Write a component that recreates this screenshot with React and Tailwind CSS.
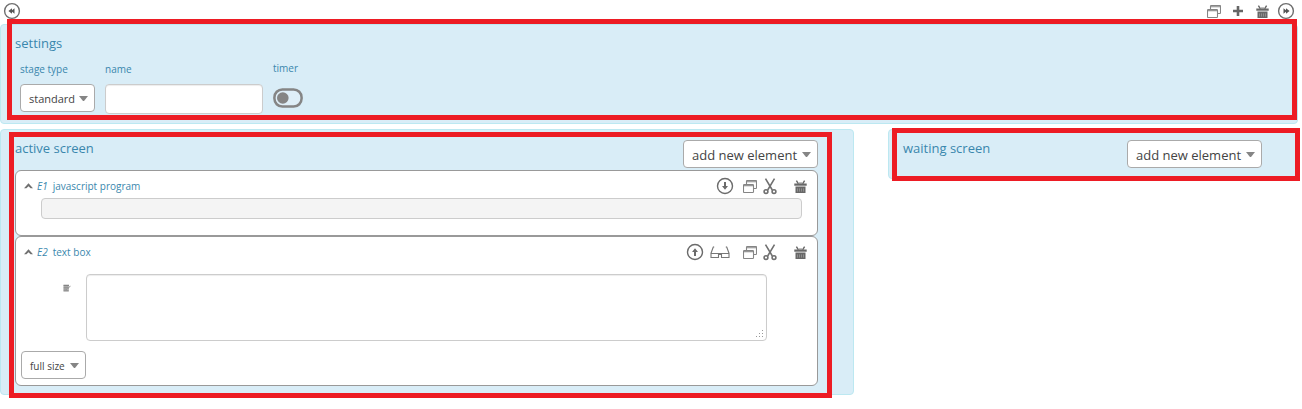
import React from "react";

const Rewind = ({ flip = false }) => (
  <svg width="18" height="18" viewBox="0 0 18 18" className={flip ? "-scale-x-100" : ""}>
    <circle cx="9" cy="9" r="7.4" fill="none" stroke="#6e6e6e" strokeWidth="1.4" />
    <path d="M5.4 9 9 6.2V11.8ZM8.2 9 11.5 6.2V11.8Z" fill="#555" />
  </svg>
);

const CircleArrow = ({ up = false }) => (
  <svg width="18" height="18" viewBox="0 0 18 18" className={up ? "-scale-y-100" : ""}>
    <circle cx="9" cy="9" r="7.5" fill="none" stroke="#6b6b6b" strokeWidth="1.4" />
    <path d="M8 5H10V9H12L9 12.8 6 9H8Z" fill="#6b6b6b" />
  </svg>
);

const Windows = () => (
  <svg width="14" height="13" viewBox="0 0 14 13" fill="none" stroke="#858585" strokeWidth="1.1">
    <path d="M3.5 4V1.2Q3.5.5 4.2.5H12.8Q13.5.5 13.5 1.2V7.8Q13.5 8.5 12.8 8.5H11M3.5 1.7H13.5" />
    <rect x=".5" y="4.5" width="10" height="8" rx=".8" />
    <path d="M.5 5.7H10.5" />
  </svg>
);

const Scissors = () => (
  <svg width="14" height="17" viewBox="0 0 14 17" fill="none" stroke="#707070" strokeWidth="1.6">
    <path d="M2.5.7 9.3 12M11.5.7 4.7 12" />
    <circle cx="3" cy="13.6" r="1.9" />
    <circle cx="11" cy="13.6" r="1.9" />
  </svg>
);

const Basket = () => (
  <svg width="13" height="13" viewBox="0 0 13 13">
    <path d="M2.4.6 4.4 3.8M10.6.6 8.6 3.8" stroke="#666" strokeWidth="1.4" fill="none" />
    <path d="M4.8 2.4H8.2V3.6H4.8Z" fill="#999" />
    <path d="M.3 3.6H12.7V5.8H.3ZM1.5 7H11.5V13H1.5Z" fill="#686868" />
    <path d="M1.5 5.8H11.5V7H1.5Z" fill="#b5b5b5" />
    <path d="M3.5 8.4V11.6M5.5 8.4V11.6M7.5 8.4V11.6M9.5 8.4V11.6" stroke="#999" strokeWidth=".8" />
  </svg>
);

const Plus = () => (
  <svg width="10" height="10" viewBox="0 0 10 10">
    <path d="M5 0V10M0 5H10" stroke="#666" strokeWidth="2.6" />
  </svg>
);

const Glasses = () => (
  <svg width="20" height="13" viewBox="0 0 20 13" fill="none" stroke="#777" strokeWidth="1.1">
    <path d="M4.2.8 3.2 1.2 1 7.2M15.8.8 16.8 1.2 19 7.2" />
    <path d="M1 7.5H19V11.5H11.5V8.5H8.5V11.5H1ZM8.5 8H11.5" />
  </svg>
);

const Chevron = () => (
  <svg width="9" height="6" viewBox="0 0 9 6">
    <path d="M0 5.2 4.5.3 9 5.2H6.6L4.5 3.3 2.4 5.2Z" fill="#707070" />
  </svg>
);

const Caret = () => (
  <svg width="9" height="5" viewBox="0 0 9 5">
    <path d="M0 0H9L5 5H4Z" fill="#858585" />
  </svg>
);

const Note = () => (
  <svg width="8" height="8" viewBox="0 0 8 8">
    <path d="M.5.5H6V7.5H.5Z" fill="#bbb" />
    <path d="M.5 1.5H6M.5 3.2H5M.5 5H4M.5 6.8H5.5M4 5.5 7.5 1.8" stroke="#777" strokeWidth=".8" />
  </svg>
);

const Grip = () => (
  <svg width="8" height="8" viewBox="0 0 8 8" fill="#999">
    <path d="M6 0H7V1H6ZM3 3H4V4H3ZM6 3H7V4H6ZM0 6H1V7H0ZM3 6H4V7H3ZM6 6H7V7H6Z" />
  </svg>
);

const Frame = ({ className }) => (
  <div className={`pointer-events-none absolute border-[5px] border-[#ed1c24] ${className}`} />
);

const panel = "relative rounded-[4px] border border-[#bce8f1] bg-[#d9edf7]";
const title = "text-[13px] leading-[18px] text-[#3a87ad]";

const AddElement = ({ className = "" }) => (
  <button className={`flex h-7 w-[135px] items-center justify-between rounded-[4px] border border-[#aaa] bg-white pl-2 pr-1.5 text-[13px] text-[#444] ${className}`}>
    <span className="whitespace-nowrap pt-[3px]">add new element</span>
    <Caret />
  </button>
);

const ElementHead = ({ id, name, children }) => (
  <div className="flex h-[26px] justify-between pl-2 pr-[10px] pt-[6px]">
    <div className="flex h-[18px] items-center text-[10px] text-[#3a87ad]">
      <Chevron />
      <i className="ml-1">{id}</i>
      <span className="ml-[5px]">{name}</span>
    </div>
    <div className="flex h-[18px] items-center">{children}</div>
  </div>
);

const EditIcons = () => (
  <>
    <Windows />
    <span className="ml-1.5"><Scissors /></span>
    <span className="ml-[17px] pt-[1px]"><Basket /></span>
  </>
);

export default function App() {
  return (
    <div className="h-[409px] w-[1302px] overflow-hidden bg-white font-['Open_Sans',sans-serif] [&_svg]:block [&_svg]:shrink-0">
      <header className="flex h-6 items-start justify-between pl-[3px] pr-[7px] pt-[2px]">
        <Rewind />
        <div className="flex h-[18px] items-center">
          <Windows />
          <span className="ml-3"><Plus /></span>
          <span className="ml-[13px]"><Basket /></span>
          <span className="ml-2"><Rewind flip /></span>
        </div>
      </header>

      <section className={`${panel} h-[100px] w-[1298px] pl-[14px] pt-[9px]`}>
        <h2 className={title}>settings</h2>
        <div className="flex text-[10px] leading-[14px] text-[#3a87ad]">
          <div className="ml-[5px] w-[85px] pt-[10px]">
            <div>stage type</div>
            <button className="mt-2 flex h-7 w-[75px] items-center justify-between rounded-[4px] border border-[#aaa] bg-white pl-2 pr-1.5 text-[11px] text-[#444]">
              <span className="pt-0.5">standard</span>
              <Caret />
            </button>
          </div>
          <div className="w-[168px] pt-[10px]">
            <div>name</div>
            <input className="mt-2 block h-[30px] w-[158px] rounded-[4px] border border-[#ccc] bg-white shadow-[inset_0_1px_1px_rgba(0,0,0,0.075)]" />
          </div>
          <div className="pt-[9px]">
            <div>timer</div>
            <svg className="mt-[13px]" width="30" height="20" viewBox="0 0 30 20">
              <rect x="1.4" y="1.4" width="27.2" height="17.2" rx="8" fill="#dfeff8" stroke="#858585" strokeWidth="2.5" />
              <circle cx="9.8" cy="10" r="5.8" fill="#858585" />
            </svg>
          </div>
        </div>
        <Frame className="-top-[6px] left-[6px] h-[101px] w-[1290px]" />
      </section>

      <main className="mt-[5px] flex items-start gap-[34px]">
        <section className={`${panel} h-[266px] w-[854px] pl-[14px] pt-[10px]`}>
          <div className="flex h-[30px] w-[803px] justify-between">
            <h2 className={`${title} -mt-px`}>active screen</h2>
            <AddElement />
          </div>
          <div className="h-[66px] w-[803px] rounded-[6px] border border-[#999] bg-white">
            <ElementHead id="E1" name="javascript program">
              <CircleArrow />
              <span className="ml-[9px] flex items-center"><EditIcons /></span>
            </ElementHead>
            <div className="ml-[25px] mt-px h-[21px] w-[761px] rounded-[4px] border border-[#ccc] bg-[#f4f4f4]" />
          </div>
          <div className="h-[150px] w-[803px] rounded-[6px] border border-[#999] bg-white">
            <ElementHead id="E2" name="text box">
              <CircleArrow up />
              <span className="ml-1.5"><Glasses /></span>
              <span className="ml-[13px] flex items-center"><EditIcons /></span>
            </ElementHead>
            <div className="mt-[11px] flex">
              <span className="ml-[47px] mt-[10px] w-[23px]"><Note /></span>
              <div className="flex h-[67px] w-[681px] items-end justify-end rounded-[4px] border border-[#ccc] bg-white p-[2px] shadow-[inset_0_1px_1px_rgba(0,0,0,0.075)]">
                <Grip />
              </div>
            </div>
            <button className="ml-[5px] mt-[10px] flex h-7 w-[65px] items-center justify-between rounded-[4px] border border-[#aaa] bg-white pl-2 pr-1.5 text-[10px] text-[#444]">
              <span className="pt-0.5">full size</span>
              <Caret />
            </button>
          </div>
          <Frame className="left-[8px] top-[2px] h-[266px] w-[823px]" />
        </section>

        <section className={`${panel} flex h-[50px] w-[411px] items-start pl-[14px] pt-[10px]`}>
          <h2 className={`${title} -mt-px w-[224px]`}>waiting screen</h2>
          <AddElement />
          <Frame className="-top-[2px] left-[3px] h-[53px] w-[408px]" />
        </section>
      </main>
    </div>
  );
}
